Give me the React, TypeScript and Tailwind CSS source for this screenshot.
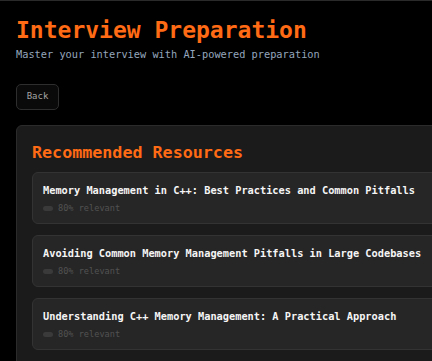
const resources = [
  "Memory Management in C++: Best Practices and Common Pitfalls",
  "Avoiding Common Memory Management Pitfalls in Large Codebases",
  "Understanding C++ Memory Management: A Practical Approach",
];

function ResourceCard({ title }: { title: string }) {
  return (
    <div className="flex flex-col rounded-md border border-[#333333] bg-[#262626] pl-[10px] pr-4 pt-[10px] pb-[9px]">
      <h3 className="text-[10.3px] leading-[15px] font-bold text-[#f5f5f5] whitespace-nowrap">{title}</h3>
      <div className="mt-1 flex h-[12px] flex-row items-center gap-[5px]">
        <span className="h-[5px] w-[10px] rounded-full bg-[#3a3a3a]"></span>
        <span className="text-[8.6px] leading-[12px] text-[#525252]">80% relevant</span>
      </div>
    </div>
  );
}

export default function App() {
  return (
    <div
      className="h-[361px] w-[432px] overflow-hidden border-t border-[#2a2a2a] bg-black px-4 pt-[15px]"
      style={{ fontFamily: '"DejaVu Sans Mono", "Liberation Mono", monospace' }}
    >
      <h1 className="text-[23px] leading-[28px] font-bold text-[#ff6a14] whitespace-nowrap">Interview Preparation</h1>
      <p className="mt-[3px] text-[10.3px] leading-[15px] text-[#94a6bd] whitespace-nowrap">
        Master your interview with AI-powered preparation
      </p>
      <button className="mt-[22px] flex h-[26px] w-[43px] items-center justify-center rounded-[5px] border border-[#2e2e2e] bg-[#0a0a0a] text-[9px] text-[#a3a3a3]">
        Back
      </button>
      <div className="mt-[15px] w-[480px] rounded-md border border-[#2b2b2b] bg-[#1b1b1b] pl-[15px] pr-4 pt-[15px] pb-4">
        <h2 className="text-[16.7px] leading-[22px] font-bold text-[#ff6a14] whitespace-nowrap">Recommended Resources</h2>
        <div className="mt-[9px] flex flex-col gap-[11px]">
          {resources.map((r) => (
            <ResourceCard key={r} title={r} />
          ))}
        </div>
      </div>
    </div>
  );
}
